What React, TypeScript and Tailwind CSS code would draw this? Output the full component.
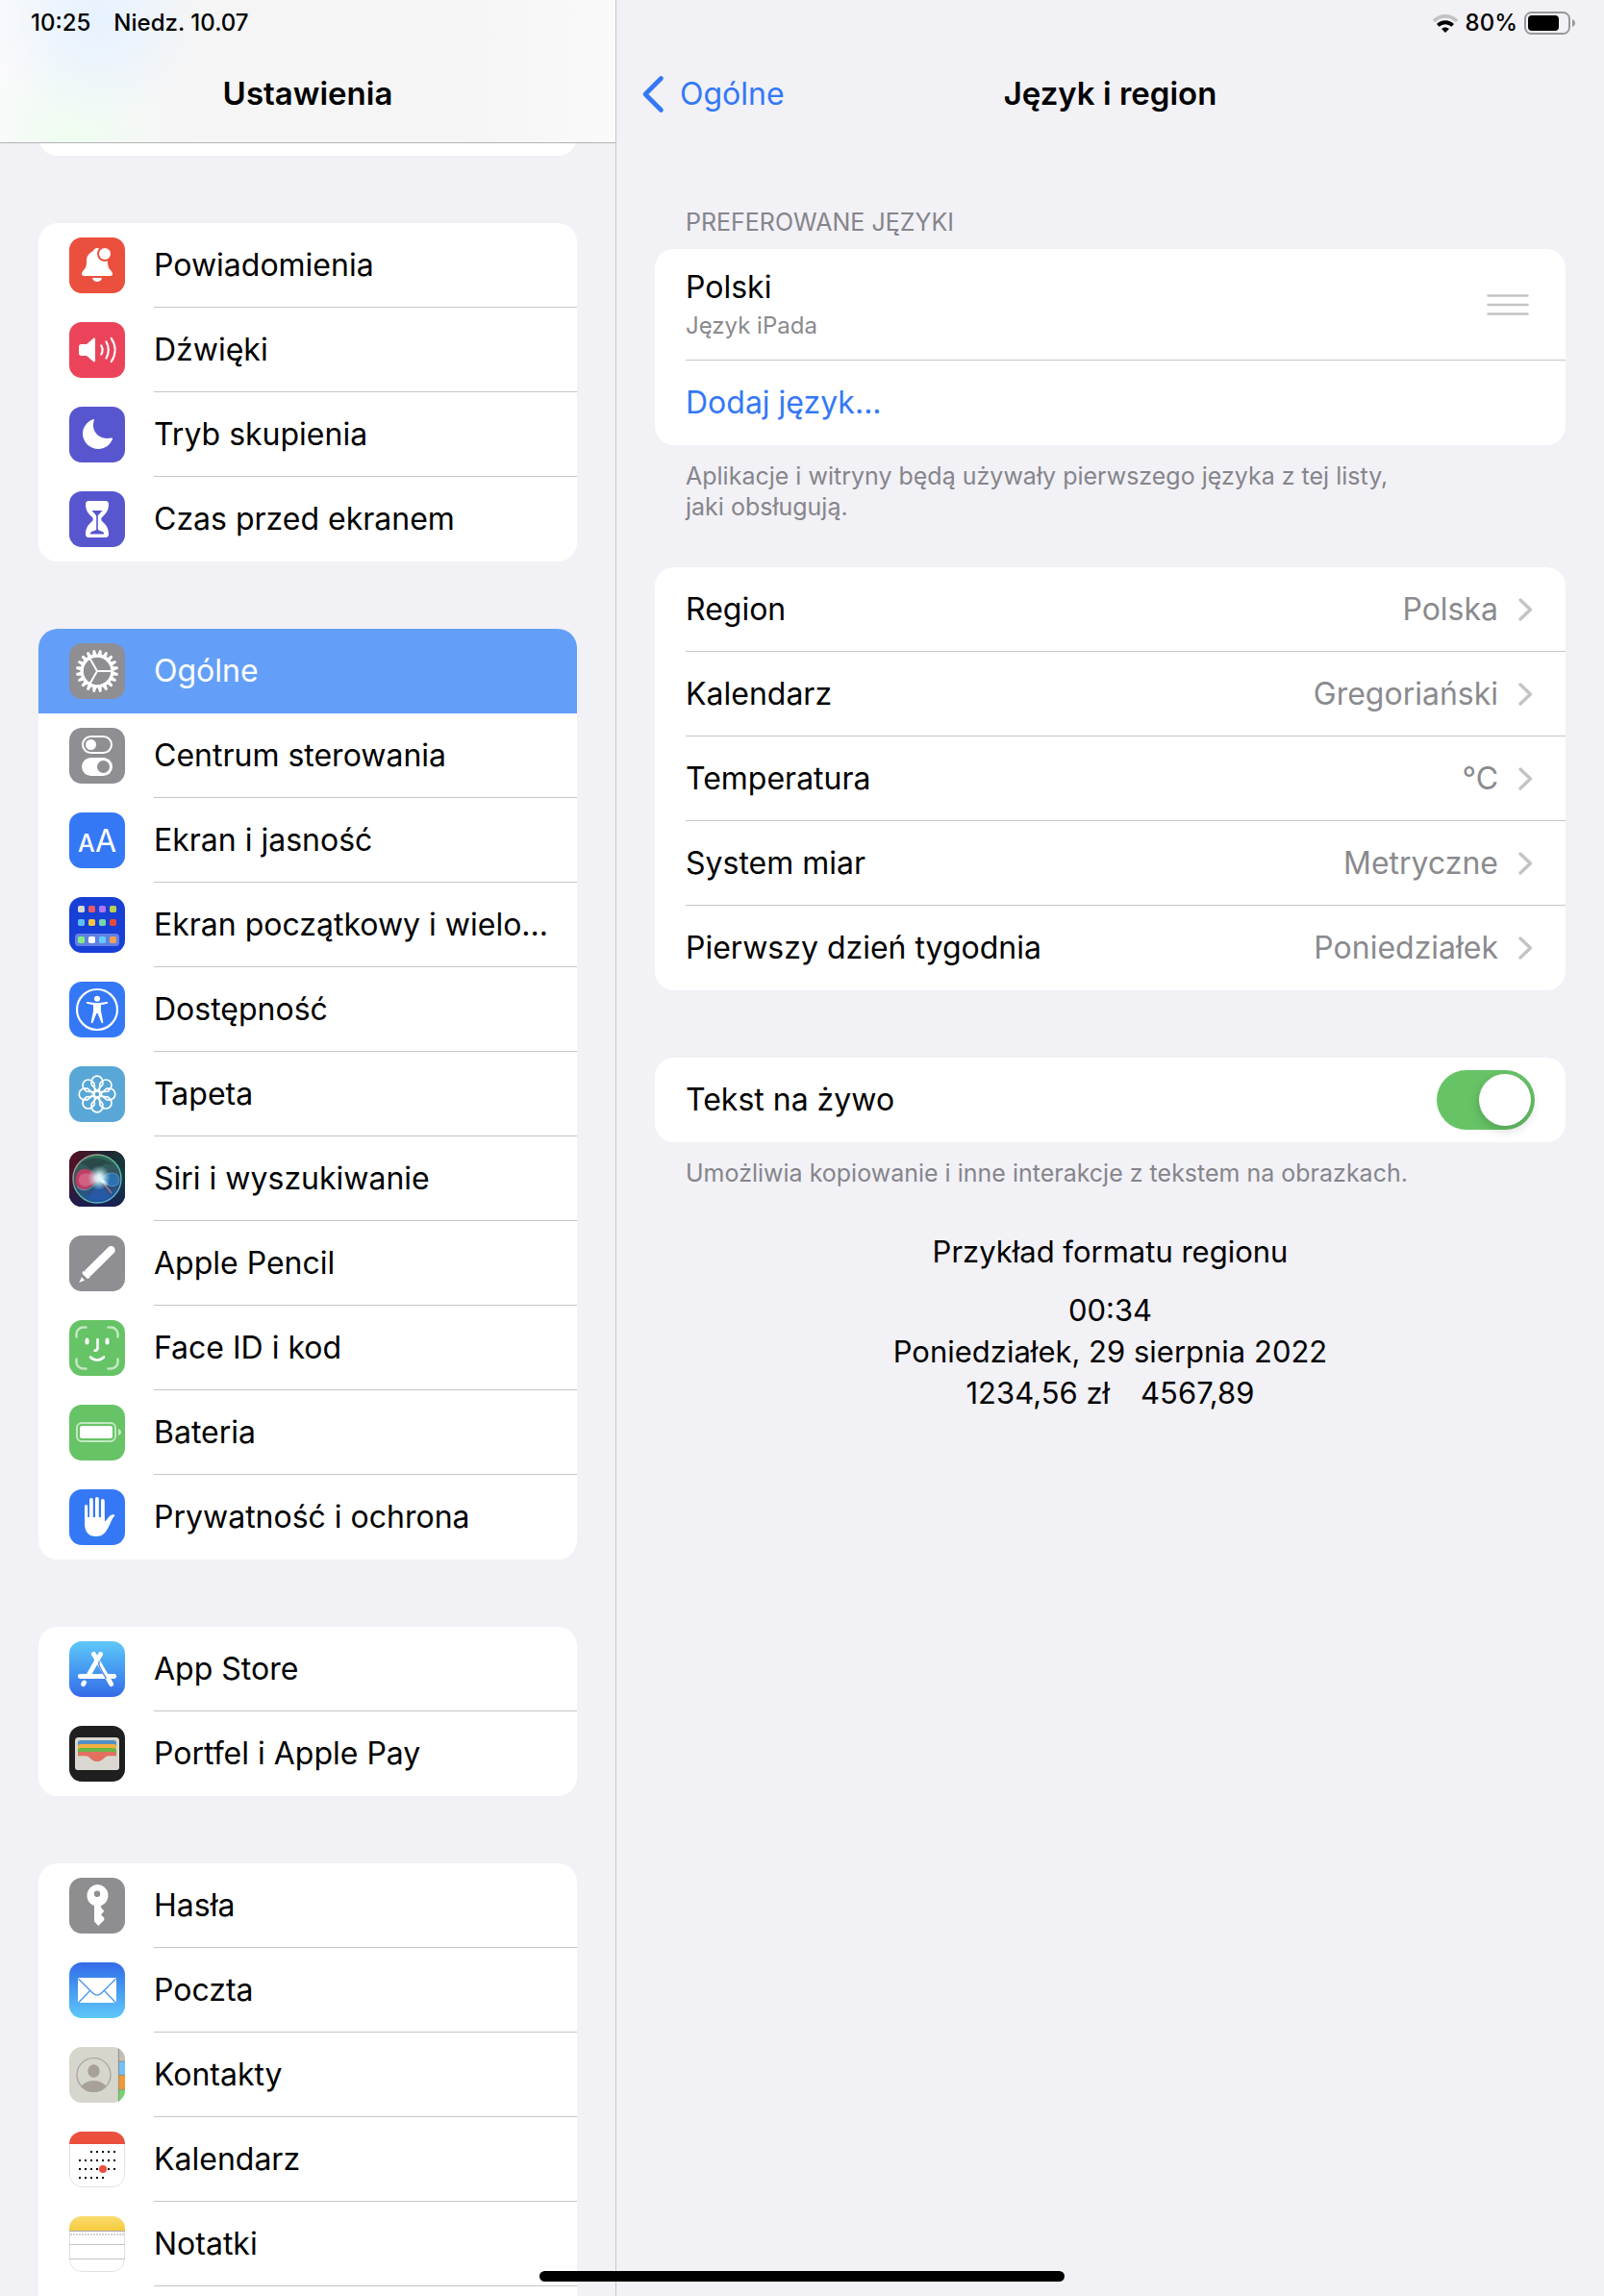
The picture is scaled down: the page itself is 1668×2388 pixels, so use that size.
import type { ReactNode } from 'react'

function IconBox({ bg, children }: { bg: string; children: ReactNode }) {
  return (
    <svg viewBox="0 0 58 58" className={`size-[58px] shrink-0 rounded-[13px] ${bg}`} aria-hidden="true">
      {children}
    </svg>
  )
}

const ray = (n: number) => Array.from({ length: n }, (_, i) => (i * 360) / n)

function BellIcon() {
  return (
    <IconBox bg="bg-[#eb4f3d]">
      <path
        fill="#fff"
        d="M29 11c-2.300 0-3.300 1.600-4.400 3.200C20.600 16 18 19.500 18 24.500c0 5-.6 6.700-2.800 9.300-1.500 1.800-2.200 3-2.200 4.300C13 39.500 14 40 15.500 40h27c1.500 0 2.500-.5 2.500-1.900 0-1.300-.7-2.500-2.200-4.300-2-2.400-2.800-4.100-2.800-9.300C40 16 34 11 29 11z"
      />
      <path fill="#fff" d="M24 42h10c-.5 2.500-2.500 4-5 4s-4.500-1.500-5-4z" />
      <circle cx="37" cy="17" r="8" fill="#eb4f3d" />
      <circle cx="37" cy="17" r="6" fill="#fff" />
    </IconBox>
  )
}

function SpeakerIcon() {
  return (
    <IconBox bg="bg-[#eb445a]">
      <path fill="#fff" d="M10 25.500c0-1.600.9-2.500 2.500-2.500H18l7-6c1-.8 2-.3 2 1v22c0 1.300-1 1.800-2 1l-7-6h-5.500c-1.600 0-2.500-.9-2.500-2.500z" />
      <g fill="none" stroke="#fff" strokeWidth="2.200" strokeLinecap="round">
        <path d="M33.300 24.500c1.600 2.800 1.600 6.200 0 9" />
        <path d="M38.500 20.500c3 5 3 12 0 17" />
        <path d="M43.800 17c5 7.500 5 16.500 0 24" />
      </g>
    </IconBox>
  )
}

function MoonIcon() {
  return (
    <IconBox bg="bg-[#5856ce]">
      <path fill="#fff" d="M24.500 13.200c1-.5 1.600.1 1.300 1.100-3.300 10.500 4.400 20.700 17.600 18.300 1.300-.3 2 .3 1.500 1.500C42.500 40 36.800 44 30.500 44 21.500 44 14 37 14 28c0-6.500 4.200-12.200 10.500-14.800z" />
    </IconBox>
  )
}

function HourglassIcon() {
  return (
    <IconBox bg="bg-[#5856ce]">
      <path
        fill="#fff"
        d="M20 10h18c2 0 3 1.200 3 3.500 0 6-2.500 9.500-6.500 13-1.700 1.500-1.700 3.500 0 5 4 3.500 6.500 7 6.500 13 0 2.300-1 3.500-3 3.500H20c-2 0-3-1.200-3-3.500 0-6 2.500-9.500 6.500-13 1.700-1.500 1.700-3.500 0-5-4-3.500-6.500-7-6.500-13 0-2.300 1-3.500 3-3.500z"
      />
      <path fill="#5856ce" d="M23.500 20h11l-4 4.500c-.5.600-.7 1-.7 2V39c0 1 .5 1.300 1.500 1.700l3.400 1.300c1 .5 1.500 1.200 1.500 2.500H21.800c0-1.300.5-2 1.500-2.500l3.400-1.300c1-.4 1.500-.7 1.500-1.700V26.500c0-1-.2-1.400-.7-2z" />
    </IconBox>
  )
}

function GearIcon() {
  return (
    <IconBox bg="bg-[#8e8e93]">
      <g fill="#fff">
        {ray(20).map((a) => (
          <path key={a} transform={`rotate(${a + 9} 29 29)`} d="M26.600 13.500l1.200-6.500h2.400l1.200 6.500z" />
        ))}
      </g>
      <circle cx="29" cy="29" r="15.800" fill="none" stroke="#fff" strokeWidth="3.200" />
      <g stroke="#fff" strokeWidth="2">
        <path d="M29 29h15" />
        <path d="M29 29l-7.600-13.200" />
        <path d="M29 29l-7.600 13.200" />
      </g>
    </IconBox>
  )
}

function TogglesIcon() {
  return (
    <IconBox bg="bg-[#8e8e93]">
      <rect x="14" y="9" width="30" height="17" rx="8.500" fill="none" stroke="#fff" strokeWidth="2" />
      <circle cx="22.500" cy="17.500" r="5.500" fill="#fff" />
      <rect x="13" y="31" width="32" height="19" rx="9.500" fill="#fff" />
      <circle cx="35.500" cy="40.500" r="6.500" fill="#8e8e93" />
    </IconBox>
  )
}

function TextSizeIcon() {
  return (
    <IconBox bg="bg-[#3478f6]">
      <text x="9" y="41" fontSize="25" fontWeight="500" fill="#fff">
        A
      </text>
      <text x="27" y="41" fontSize="32" fontWeight="400" fill="#fff">
        A
      </text>
    </IconBox>
  )
}

const homeDots = [
  ['#d9d7cf', '#eb5a66', '#b073f5', '#bad054'],
  ['#5fbff8', '#f5c443', '#74d6a9', '#e64a3c'],
  ['#86ec83', '#ffffff', '#62ccfa', '#f3a057'],
]

function HomeScreenIcon() {
  return (
    <IconBox bg="bg-[#183fd6]">
      <rect x="6" y="38" width="46" height="13" rx="3.500" fill="#6181e4" />
      {homeDots.map((row, r) =>
        row.map((c, i) => <rect key={c} x={9 + i * 11} y={[9, 23, 41][r]} width="7" height="7" rx="1.800" fill={c} />),
      )}
    </IconBox>
  )
}

function AccessibilityIcon() {
  return (
    <IconBox bg="bg-[#3478f6]">
      <circle cx="29" cy="29" r="21" fill="none" stroke="#fff" strokeWidth="2.200" />
      <circle cx="29" cy="17.800" r="3" fill="#fff" />
      <path
        fill="#fff"
        d="M18.800 21c3.500.7 6.800 1.200 10.200 1.200s6.700-.5 10.200-1.200c1.200-.2 1.600 1.300.4 1.700l-6.600 1.500v6.300l2.300 11.600c.2 1.300-1.500 1.600-1.900.4L29.600 33h-1.200l-3.800 9.500c-.4 1.200-2.100.9-1.900-.4L25 30.500v-6.300l-6.600-1.500c-1.200-.4-.8-1.900.4-1.700z"
      />
    </IconBox>
  )
}

function FlowerIcon() {
  return (
    <IconBox bg="bg-[#59a7d7]">
      <g fill="none" stroke="#fff" strokeWidth="1.700" strokeLinejoin="round">
        {ray(8).map((a) => (
          <path key={a} transform={`rotate(${a} 29 29)`} d="M29 25.800l-5.800-6.800V16a5.800 5.800 0 0 1 11.600 0v3z" />
        ))}
        <circle cx="29" cy="29" r="3.200" />
      </g>
    </IconBox>
  )
}

function SiriIcon() {
  return (
    <IconBox bg="bg-[#1b1b2c]">
      <defs>
        <linearGradient id="siriBg" x1="0" y1="0" x2="1" y2="0.300">
          <stop offset="0" stopColor="#5c0f27" />
          <stop offset="0.500" stopColor="#26202f" />
          <stop offset="1" stopColor="#143a3c" />
        </linearGradient>
        <linearGradient id="siriFloor" x1="0" y1="0" x2="0" y2="1">
          <stop offset="0.400" stopColor="#16204a" stopOpacity="0" />
          <stop offset="1" stopColor="#1a1c5c" stopOpacity="0.800" />
        </linearGradient>
        <linearGradient id="siriOrb" x1="0.300" y1="0" x2="0.400" y2="1">
          <stop offset="0" stopColor="#2b6a58" />
          <stop offset="0.500" stopColor="#36505f" />
          <stop offset="1" stopColor="#1f56a0" />
        </linearGradient>
        <linearGradient id="siriRing" x1="0" y1="0" x2="1" y2="1">
          <stop offset="0" stopColor="#c58792" />
          <stop offset="0.500" stopColor="#5cc193" />
          <stop offset="1" stopColor="#5ba6f0" />
        </linearGradient>
        <radialGradient id="siriGlow">
          <stop offset="0" stopColor="#fff" />
          <stop offset="0.300" stopColor="#eafcff" stopOpacity="0.850" />
          <stop offset="1" stopColor="#9be8e8" stopOpacity="0" />
        </radialGradient>
      </defs>
      <rect width="58" height="58" fill="url(#siriBg)" />
      <rect width="58" height="58" fill="url(#siriFloor)" />
      <circle cx="29" cy="29" r="25" fill="url(#siriOrb)" stroke="url(#siriRing)" strokeWidth="1.400" />
      <path fill="#20292f" opacity="0.400" d="M12 13c10-8 26-7 34 3-9-5-14-3-17 11-4-8-10-11-17-14z" />
      <path fill="#d93a68" opacity="0.800" d="M31 29c-7-10-14-12-20-9-5 3-6 12-3 17 4 6 12 5 23-8z" />
      <path fill="#f08aa5" opacity="0.450" d="M31 29c-7-6-15-8-20-3-3 5 0 11 5 11 6 0 10-5 15-8z" />
      <path fill="#2c7fd0" opacity="0.700" d="M33 30c4-7 12-9 17-5 3 4 2 10-2 11-5 2-10-1-15-6z" />
      <path fill="none" stroke="#6fb8e8" strokeWidth="0.800" opacity="0.700" d="M33 30c4-7 12-9 17-5 3 4 2 10-2 11-5 2-10-1-15-6z" />
      <path fill="#2a5ec2" opacity="0.500" d="M31 30c-3 7-7 14-12 19 8 4 18 3 24-3-5-4-9-9-12-16z" />
      <path fill="none" stroke="#79d3c2" strokeWidth="1" opacity="0.600" d="M8 37c6 7 15 4 23-7" />
      <path stroke="#d07a9a" strokeWidth="1.500" opacity="0.800" d="M33 30l11 14" />
      <ellipse cx="31" cy="28" rx="12" ry="13" fill="url(#siriGlow)" />
      <ellipse cx="34" cy="31" rx="9" ry="3" transform="rotate(35 34 31)" fill="url(#siriGlow)" />
    </IconBox>
  )
}

function PencilIcon() {
  return (
    <IconBox bg="bg-[#8e8e93]">
      <path stroke="#fff" strokeWidth="8.500" strokeLinecap="round" d="M43.500 15.300L20 38.500" />
      <path fill="#fff" d="M14.500 36.500l7.500 7.300-4 1.500-5-5z" />
      <path fill="#8e8e93" d="M12.800 39l7 7-1.500 1.300-6.800-7z" />
      <path fill="#fff" d="M13 43.300l3.200 3.200-6 2.400z" />
    </IconBox>
  )
}

function FaceIcon() {
  return (
    <IconBox bg="bg-[#67c466]">
      <g fill="none" stroke="#fff" strokeLinecap="round">
        <g strokeWidth="2.600" opacity="0.600">
          <path d="M7.500 17.500v-3a7 7 0 0 1 7-7h3" />
          <path d="M40.500 7.500h3a7 7 0 0 1 7 7v3" />
          <path d="M50.500 40.500v3a7 7 0 0 1-7 7h-3" />
          <path d="M17.500 50.500h-3a7 7 0 0 1-7-7v-3" />
        </g>
        <path strokeWidth="4" d="M18.500 20.500v3M39.500 20.500v3" />
        <path strokeWidth="2.600" d="M29.500 20v9c0 1.800-.8 2.700-3 2.700" />
        <path strokeWidth="2.600" d="M22 38.500c4 4 10 4 14 0" />
      </g>
    </IconBox>
  )
}

function BatteryIcon() {
  return (
    <IconBox bg="bg-[#67c466]">
      <rect x="8" y="19" width="40" height="19" rx="5" fill="none" stroke="#fff" strokeWidth="2" opacity="0.600" />
      <rect x="11" y="22" width="34" height="13" rx="2.500" fill="#fff" />
      <path fill="#fff" opacity="0.600" d="M51 25c1.800.5 3 1.800 3 3.500S52.800 31.500 51 32z" />
    </IconBox>
  )
}

function HandIcon() {
  return (
    <IconBox bg="bg-[#3478f6]">
      <g stroke="#fff" strokeLinecap="round">
        <path strokeWidth="3.200" d="M17.600 17.500V33" />
        <path strokeWidth="3.800" d="M22.900 11v20M28.900 10v20M34.900 12v20" />
      </g>
      <path
        fill="#fff"
        d="M16 29h20.800v3.500c0 .8.700.9 1.200.2l3.400-4.200c1.500-1.800 3.300-2.600 5-2.200 1 .3 1 1 .4 1.700-3 3.200-3.800 7.500-6.300 12-3.200 6-6.500 9-12.500 9-7.500 0-12-4.500-12-13z"
      />
    </IconBox>
  )
}

function AppStoreIcon() {
  return (
    <IconBox bg="bg-linear-to-b from-[#60c8f8] to-[#356be8]">
      <g stroke="#fff" strokeWidth="4.800" strokeLinecap="round" fill="none">
        <path d="M11.300 36.500h35.400" />
        <path d="M32.700 13.300L20.500 34.500" />
        <path d="M25.300 13.300L43.800 44.700" />
        <path d="M15.700 42.700l-1.200 2" />
      </g>
      <path fill="none" stroke="#4685ee" strokeWidth="1.400" d="M31.500 20.500c-1.500 2.500-1 4.500 1 8l6 10.500" />
      <path fill="none" stroke="#4685ee" strokeWidth="1.600" d="M13 39.700h21" />
    </IconBox>
  )
}

function WalletIcon() {
  return (
    <IconBox bg="bg-[#1f1f1f]">
      <rect x="6" y="12" width="46" height="34" rx="3.500" fill="#d9d7cf" />
      <path fill="#5391c7" d="M9 32V17.500C9 16 10 15 11.500 15h35c1.500 0 2.500 1 2.500 2.500V32z" />
      <path fill="#f2b03d" d="M9 32V21.500c0-1.500 1-2.500 2.500-2.500h35c1.500 0 2.500 1 2.500 2.500V32z" />
      <path fill="#68b74a" d="M9 32v-6.500c0-1.500 1-2.500 2.500-2.500h35c1.500 0 2.500 1 2.500 2.500V32z" />
      <path fill="#e17060" d="M9 32v-2.500c0-1.500 1-2.500 2.500-2.500h35c1.500 0 2.500 1 2.500 2.500V32z" />
      <path fill="#d9d7cf" d="M6 31h46v11.500c0 2-1.500 3.500-3.500 3.500h-39C7.500 46 6 44.500 6 42.500z" />
      <path fill="#e17060" d="M9 30.500h40v.8H42c-2 0-3.500.4-5 1.600-2.500 2-4 4.100-8 4.100s-5.500-2.100-8-4.100c-1.500-1.200-3-1.600-5-1.600H9z" />
    </IconBox>
  )
}

function KeyIcon() {
  return (
    <IconBox bg="bg-[#8e8e91]">
      <path
        fill="#fff"
        fillRule="evenodd"
        d="M29.300 7a11.500 11.500 0 0 1 3.700 22.300v1.400l3.300 4.100-3 3.200v.7l3 3v2.200l-6 6.100-4.300-4.600V29.300A11.500 11.500 0 0 1 29.300 7zM29 13.600a3.200 3.200 0 1 0 0 6.400 3.200 3.200 0 0 0 0-6.400z"
      />
    </IconBox>
  )
}

function MailIcon() {
  return (
    <IconBox bg="bg-linear-to-b from-[#356be8] to-[#60c8f8]">
      <rect x="9" y="16" width="40" height="26" rx="1" fill="#fff" />
      <g fill="none" stroke="#4a95f0" strokeWidth="1.300">
        <path d="M9.500 17l14.500 14.500c3.300 3.500 6.700 3.500 10 0L48.500 17" />
        <path d="M9.500 42l12-12.500M48.500 42l-12-12.500" />
      </g>
    </IconBox>
  )
}

function ContactsIcon() {
  return (
    <IconBox bg="bg-[#d6d6cc]">
      <path fill="#c0beb5" d="M51 0h7v15h-7z" />
      <path fill="#74c0f3" d="M51 15h7v14h-7z" />
      <path fill="#f09a37" d="M51 29h7v15h-7z" />
      <path fill="#74d472" d="M51 44h7v14h-7z" />
      <path fill="none" stroke="#8a877f" strokeWidth="0.800" d="M51.400 0v58M51 15.300h7M51 29.300h7M51 44.300h7" />
      <clipPath id="avatar">
        <circle cx="25.500" cy="29" r="18" />
      </clipPath>
      <g clipPath="url(#avatar)" fill="#a8a199">
        <ellipse cx="25.500" cy="25" rx="6.200" ry="6.800" />
        <ellipse cx="25.500" cy="45" rx="14" ry="10" />
      </g>
      <circle cx="25.500" cy="29" r="17.500" fill="none" stroke="#a8a199" strokeWidth="1.200" />
    </IconBox>
  )
}

// first and last dotted column of every calendar week
const weeks = [
  [2, 6],
  [0, 6],
  [0, 6],
  [0, 4],
]

function CalendarIcon() {
  return (
    <IconBox bg="bg-white">
      <rect x="0.500" y="0.500" width="57" height="57" rx="12.500" fill="none" stroke="#e0e0e0" />
      <path fill="#eb4f3d" d="M0 0h58v13H0z" />
      {weeks.map(([from, to], w) =>
        [0, 1, 2, 3, 4, 5, 6]
          .filter((d) => d >= from && d <= to)
          .map((d) => <rect key={`${w}-${d}`} x={10 + d * 6} y={20 + w * 9} width="2" height="2" />),
      )}
      <circle cx="35" cy="39" r="4" fill="#eb4f3d" />
    </IconBox>
  )
}

function NotesIcon() {
  return (
    <IconBox bg="bg-white">
      <defs>
        <linearGradient id="noteTop" x1="0" y1="0" x2="0" y2="1">
          <stop offset="0" stopColor="#f9dc70" />
          <stop offset="1" stopColor="#f6cb3c" />
        </linearGradient>
      </defs>
      <rect x="0.500" y="0.500" width="57" height="57" rx="12.500" fill="none" stroke="#e0e0e0" />
      <path fill="url(#noteTop)" d="M0 0h58v15H0z" />
      <path stroke="#a9a9ac" strokeWidth="1" d="M0 15.500h58" />
      <path stroke="#c4c4c6" strokeWidth="1" d="M0 29.500h58M0 44.500h58" />
      <path stroke="#d4d4d4" strokeWidth="2" strokeDasharray="2 1" d="M1 19h57" />
    </IconBox>
  )
}

type Item = { label: string; icon: ReactNode; active?: boolean }

const groups: Item[][] = [
  [
    { label: 'Powiadomienia', icon: <BellIcon /> },
    { label: 'Dźwięki', icon: <SpeakerIcon /> },
    { label: 'Tryb skupienia', icon: <MoonIcon /> },
    { label: 'Czas przed ekranem', icon: <HourglassIcon /> },
  ],
  [
    { label: 'Ogólne', icon: <GearIcon />, active: true },
    { label: 'Centrum sterowania', icon: <TogglesIcon /> },
    { label: 'Ekran i jasność', icon: <TextSizeIcon /> },
    { label: 'Ekran początkowy i wielo...', icon: <HomeScreenIcon /> },
    { label: 'Dostępność', icon: <AccessibilityIcon /> },
    { label: 'Tapeta', icon: <FlowerIcon /> },
    { label: 'Siri i wyszukiwanie', icon: <SiriIcon /> },
    { label: 'Apple Pencil', icon: <PencilIcon /> },
    { label: 'Face ID i kod', icon: <FaceIcon /> },
    { label: 'Bateria', icon: <BatteryIcon /> },
    { label: 'Prywatność i ochrona', icon: <HandIcon /> },
  ],
  [
    { label: 'App Store', icon: <AppStoreIcon /> },
    { label: 'Portfel i Apple Pay', icon: <WalletIcon /> },
  ],
]

const appGroup: Item[] = [
  { label: 'Hasła', icon: <KeyIcon /> },
  { label: 'Poczta', icon: <MailIcon /> },
  { label: 'Kontakty', icon: <ContactsIcon /> },
  { label: 'Kalendarz', icon: <CalendarIcon /> },
  { label: 'Notatki', icon: <NotesIcon /> },
]

const regionRows = [
  ['Region', 'Polska'],
  ['Kalendarz', 'Gregoriański'],
  ['Temperatura', '°C'],
  ['System miar', 'Metryczne'],
  ['Pierwszy dzień tygodnia', 'Poniedziałek'],
]

function SidebarRow({ item, divider }: { item: Item; divider: boolean }) {
  return (
    <li>
      <button
        className={`flex h-[88px] w-full items-center gap-[30px] pl-8 text-left ${item.active ? 'bg-[#639ff8] text-white' : ''}`}
      >
        {item.icon}
        <span className={`flex h-full min-w-0 flex-1 items-center whitespace-nowrap ${divider ? 'border-b border-[#c6c6c8]' : ''}`}>
          {item.label}
        </span>
      </button>
    </li>
  )
}

function SidebarGroup({ items, open = false }: { items: Item[]; open?: boolean }) {
  return (
    <ul className={`overflow-hidden bg-white ${open ? 'flex-1 rounded-t-[20px]' : 'shrink-0 rounded-[20px]'}`}>
      {items.map((item, i) => (
        <SidebarRow key={item.label} item={item} divider={!item.active && (open || i < items.length - 1)} />
      ))}
    </ul>
  )
}

function Sidebar() {
  return (
    <aside className="flex h-full w-[641px] shrink-0 flex-col border-r border-[#c6c6c8]">
      <header className="relative z-10 h-[149px] shrink-0 border-b border-[#b2b2b4] bg-[#f6f6f6] bg-[radial-gradient(circle_at_100px_20px,#e6f2ff_0px,transparent_110px),radial-gradient(circle_at_75px_145px,#effdf0_0px,transparent_100px),linear-gradient(90deg,#fafafc_0px,#f5f5f5_200px,#f5f5f5_480px,#fafafa_640px)]">
        <div className="flex h-12 items-center gap-6 px-8 text-2xl font-medium">
          <span>10:25</span>
          <span>Niedz. 10.07</span>
        </div>
        <h1 className="flex h-[100px] items-center justify-center text-[33px] font-semibold">Ustawienia</h1>
      </header>
      <nav aria-label="Ustawienia" className="flex min-h-0 flex-1 flex-col gap-[70px] overflow-hidden px-10">
        <div className="-mt-7 h-[41px] shrink-0 rounded-[20px] bg-white" />
        {groups.map((items) => (
          <SidebarGroup key={items[0].label} items={items} />
        ))}
        <SidebarGroup items={appGroup} open />
      </nav>
    </aside>
  )
}

function StatusIcons() {
  return (
    <div className="flex h-12 items-center justify-end gap-[7px] pr-[30px] text-2xl font-medium">
      <svg viewBox="0 0 28 20" className="h-5 w-7" fill="none" aria-label="Wi-Fi">
        <path stroke="#c2c2c6" strokeWidth="3.800" d="M2 7.800c6.800-6.700 17.200-6.700 24 0" />
        <path stroke="#000" strokeWidth="3.800" d="M6.300 12.400c4.400-4.200 11-4.200 15.400 0" />
        <path fill="#000" d="M14 20l-4-4c2.200-2.100 5.800-2.100 8 0z" />
      </svg>
      <span>80%</span>
      <svg viewBox="0 0 53 24" className="h-6 w-[53px]" aria-label="80%">
        <rect x="1" y="1" width="46" height="22" rx="6.500" fill="none" stroke="#98989c" strokeWidth="2" />
        <rect x="4" y="4" width="32" height="16" rx="4" />
        <path fill="#98989c" d="M50 8c1.800.8 3 2.200 3 4s-1.200 3.200-3 4z" />
      </svg>
    </div>
  )
}

function Detail() {
  return (
    <main className="flex min-w-0 flex-1 flex-col">
      <StatusIcons />
      <div className="grid h-[100px] grid-cols-[1fr_auto_1fr] items-center px-[26px]">
        <button className="flex items-center gap-4 text-[#3478f6]">
          <svg viewBox="0 0 24 40" className="h-10 w-6" fill="none" stroke="currentColor" strokeWidth="4.600" strokeLinecap="round" strokeLinejoin="round" aria-hidden="true">
            <path d="M20.500 3.500L4 20l16.500 16.500" />
          </svg>
          Ogólne
        </button>
        <h2 className="text-[33px] font-semibold">Język i region</h2>
      </div>

      <div className="flex flex-col px-10 pt-[67px]">
        <h3 className="px-8 pb-3 text-[25px] leading-8 text-[#85858b]">PREFEROWANE JĘZYKI</h3>
        <section className="rounded-[20px] bg-white pl-8">
          <div className="flex h-[116px] items-center justify-between border-b border-[#c6c6c8] pr-[38px]">
            <div>
              <p className="leading-10">Polski</p>
              <p className="pt-1 text-2xl text-[#8a8a8e]">Język iPada</p>
            </div>
            <svg viewBox="0 0 44 22" className="h-[22px] w-11" stroke="#c4c4c6" strokeWidth="2.500" strokeLinecap="round" aria-hidden="true">
              <path d="M1.500 1.500h41M1.500 11h41M1.500 20.500h41" />
            </svg>
          </div>
          <button className="flex h-[88px] w-full items-center text-[#3478f6]">Dodaj język...</button>
        </section>
        <p className="max-w-[820px] px-8 pt-4 text-[25px] leading-8 text-[#85858b]">
          Aplikacje i witryny będą używały pierwszego języka z tej listy, jaki obsługują.
        </p>

        <ul className="mt-[47px] rounded-[20px] bg-white pl-8">
          {regionRows.map(([label, value], i) => (
            <li key={label}>
              <button className={`flex h-[88px] w-full items-center pr-[34px] ${i < regionRows.length - 1 ? 'border-b border-[#c6c6c8]' : ''}`}>
                <span>{label}</span>
                <span className="ml-auto text-[#8a8a8e]">{value}</span>
                <svg viewBox="0 0 16 26" className="ml-5 h-[26px] w-4" fill="none" stroke="#c4c4c6" strokeWidth="3.500" strokeLinecap="round" strokeLinejoin="round" aria-hidden="true">
                  <path d="M3 3l10.500 10L3 23" />
                </svg>
              </button>
            </li>
          ))}
        </ul>

        <label className="mt-[70px] flex h-[88px] items-center justify-between rounded-[20px] bg-white px-8">
          Tekst na żywo
          <input
            type="checkbox"
            role="switch"
            defaultChecked
            className="h-[62px] w-[102px] appearance-none rounded-full bg-[#e9e9ea] p-1 before:block before:size-[54px] before:rounded-full before:bg-white before:shadow-[0_4px_12px_rgba(0,0,0,0.2)] checked:bg-[#67c466] checked:before:ml-10"
          />
        </label>
        <p className="px-8 pt-4 text-[25px] leading-8 text-[#85858b]">Umożliwia kopiowanie i inne interakcje z tekstem na obrazkach.</p>

        <div className="flex flex-col items-center pt-11 text-[31px] leading-[43px]">
          <p className="pb-[18px]">Przykład formatu regionu</p>
          <p>00:34</p>
          <p>Poniedziałek, 29 sierpnia 2022</p>
          <p className="flex gap-8">
            <span>1234,56 zł</span>
            <span>4567,89</span>
          </p>
        </div>
      </div>
    </main>
  )
}

export default function App() {
  return (
    <div className="relative flex h-screen overflow-hidden bg-[#f2f1f6] font-['Inter',sans-serif] text-[32px] text-black">
      <Sidebar />
      <Detail />
      <div className="absolute bottom-[15px] left-1/2 h-[11px] w-[546px] -translate-x-1/2 rounded-full bg-black" />
    </div>
  )
}
